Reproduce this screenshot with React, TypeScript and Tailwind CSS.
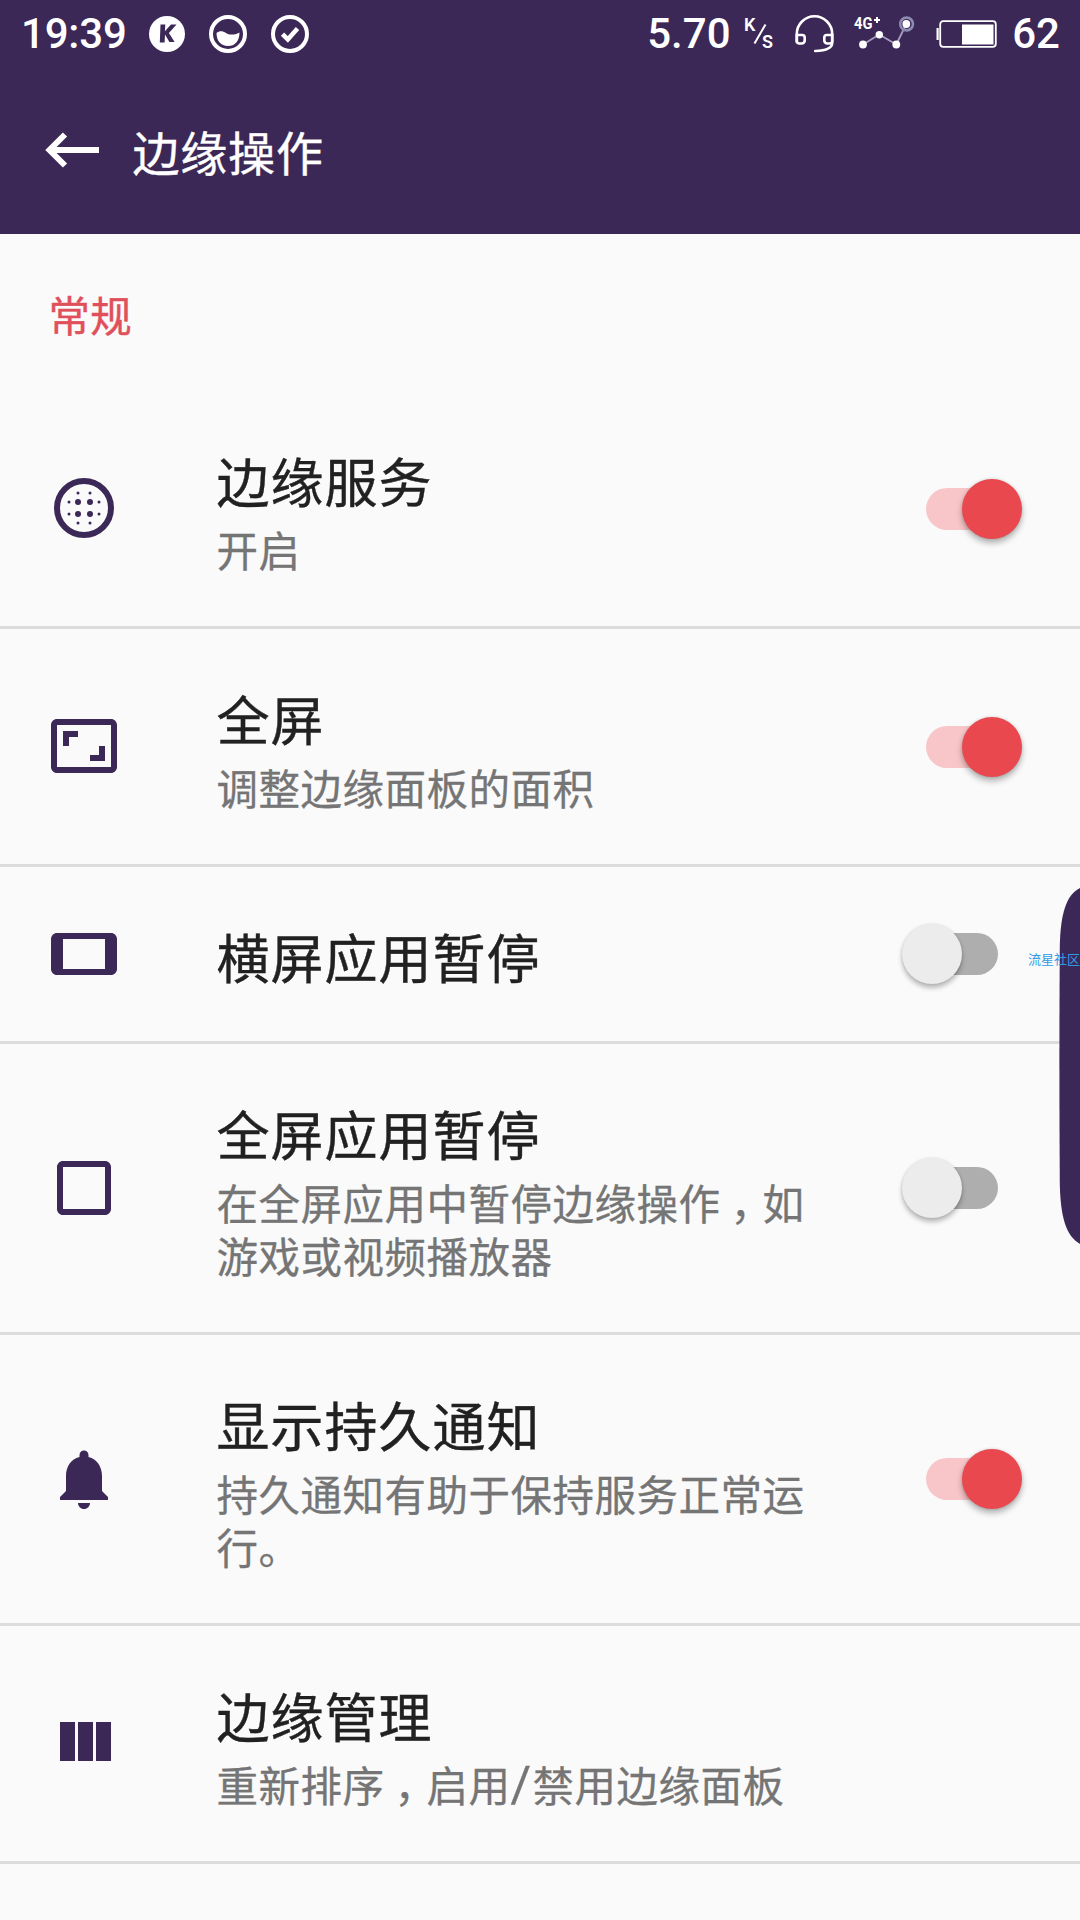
import React from "react";

const INK = "#3b2856";

function KIcon() {
  return (
    <svg width="38" height="38" viewBox="0 0 38 38">
      <circle cx="19" cy="19" r="18" fill="#fff" />
      <path d="M12.500 9.500h4.800l-.4 6.800 6.100-6.800h5.500l-7.600 8.400 5.700 9.100h-5.200l-4.400-7.400-.4 7.900h-4.800z" fill={INK} />
    </svg>
  );
}

function WaveIcon() {
  return (
    <svg width="38" height="38" viewBox="0 0 38 38">
      <circle cx="19" cy="19" r="17" fill="none" stroke="#fff" strokeWidth="4" />
      <path d="M7.500 18c3-2.400 6-2.400 9.500 0s8.500 2 13.500-.6C30.500 26 26 31 19 31S7.500 26 7.500 18z" fill="#fff" />
    </svg>
  );
}

function CheckIcon() {
  return (
    <svg width="38" height="38" viewBox="0 0 38 38">
      <circle cx="19" cy="19" r="17" fill="none" stroke="#fff" strokeWidth="4" />
      <path d="M11.500 19.200l5.300 5.300 9.700-11" fill="none" stroke="#fff" strokeWidth="4.600" />
    </svg>
  );
}

function HeadsetIcon() {
  return (
    <svg width="39" height="38" viewBox="0 0 39 38" fill="none" stroke="#fff" strokeWidth="2.600">
      <path d="M1.800 27V19a17.700 17.700 0 0 1 35.400 0v9c0 5-5 7.500-17 8" strokeLinecap="round" />
      <path d="M1.800 20h5.400a2.500 2.500 0 0 1 2.500 2.500v3a3 3 0 0 1-3 3h-2.400a2.500 2.500 0 0 1-2.500-2.500z" />
      <path d="M37.200 20h-5.400a2.500 2.500 0 0 0-2.500 2.500v3a3 3 0 0 0 3 3h2.400a2.500 2.500 0 0 0 2.500-2.500z" />
    </svg>
  );
}

function SignalIcon() {
  return (
    <svg width="62" height="36" viewBox="0 0 62 36" className="overflow-visible">
      <path d="M9 28.500L25.300 18.500L42.300 28.500L52.300 8" fill="none" stroke="#a99fc0" strokeWidth="1.800" />
      <circle cx="52.600" cy="8" r="6.400" fill="none" stroke="#8c8ab0" strokeWidth="2.600" />
      <g fill="#fff">
        <circle cx="9" cy="28.500" r="3.900" />
        <circle cx="25.300" cy="18.700" r="3.700" />
        <circle cx="42.300" cy="28.500" r="3.900" />
        <circle cx="52.300" cy="8" r="3.900" />
      </g>
      <text x="0" y="13" fill="#fff" fontSize="16.500" fontWeight="700" fontFamily="Roboto, sans-serif" textLength="18.500" lengthAdjust="spacingAndGlyphs">4G</text>
      <path d="M20 4h6M23 1v6" stroke="#fff" strokeWidth="2" />
    </svg>
  );
}

function BatteryIcon() {
  return (
    <svg width="62" height="30" viewBox="0 0 62 30">
      <rect x="4.200" y="2.200" width="55.600" height="25.600" rx="3" fill="none" stroke="#fff" strokeWidth="1.800" />
      <rect x="0.500" y="9" width="2.200" height="12" fill="#fff" />
      <rect x="26" y="5.500" width="31.500" height="20" fill="#fff" />
    </svg>
  );
}

function StatusBar() {
  return (
    <div className="flex h-[66px] items-center justify-between pt-px pr-[20px] pl-[21px] text-[42px] leading-[66px] font-medium text-white">
      <div className="flex items-center">
        <span className="w-[127px] tracking-[-0.2px]">19:39</span>
        <KIcon />
        <span className="ml-[23px]"><WaveIcon /></span>
        <span className="ml-[24px]"><CheckIcon /></span>
      </div>
      <div className="flex items-center">
        <span className="w-[97px]">5.70</span>
        <svg width="32" height="42" viewBox="0 -2 32 42" className="mr-[19px] overflow-visible">
          <text x="0" y="16" fill="#fff" fontSize="18" fontWeight="600" fontFamily="Roboto, sans-serif">K</text>
          <path d="M10.500 28.500L21.500 9.500" stroke="#fff" strokeWidth="2" />
          <text x="18" y="33" fill="#fff" fontSize="18" fontWeight="600" fontFamily="Roboto, sans-serif">S</text>
        </svg>
        <HeadsetIcon />
        <span className="ml-[20px]"><SignalIcon /></span>
        <span className="ml-[20px]"><BatteryIcon /></span>
        <span className="ml-[14px]">62</span>
      </div>
    </div>
  );
}

function BlurCircular() {
  return (
    <g>
      <circle cx="12" cy="12" r="9" fill="none" stroke={INK} strokeWidth="2" />
      {[10, 14].map((x) => [10, 14].map((y) => <circle key={`${x}-${y}`} cx={x} cy={y} r="1" />))}
      {[7, 17].map((a) =>
        [10, 14].map((b) => (
          <g key={`${a}-${b}`}>
            <circle cx={a} cy={b} r="0.5" />
            <circle cx={b} cy={a} r="0.5" />
          </g>
        )),
      )}
    </g>
  );
}

const AspectRatio = () => (
  <path d="M19 12h-2v3h-3v2h5v-5zM7 9h3V7H5v5h2V9zm14-6H3c-1.100 0-2 .9-2 2v14c0 1.100.9 2 2 2h18c1.100 0 2-.9 2-2V5c0-1.100-.9-2-2-2zm0 16.010H3V4.990h18v14.020z" />
);
const Landscape = () => (
  <path d="M1.010 7L1 17c0 1.100.9 2 2 2h18c1.100 0 2-.9 2-2V7c0-1.100-.9-2-2-2H3c-1.100 0-1.990.9-1.990 2zM19 7v10H5V7h14z" />
);
const Square = () => (
  <path d="M19 3H5c-1.100 0-2 .9-2 2v14c0 1.100.9 2 2 2h14c1.100 0 2-.9 2-2V5c0-1.100-.9-2-2-2zm0 16H5V5h14v14z" />
);
const Bell = () => (
  <path d="M12 22c1.100 0 2-.9 2-2h-4c0 1.100.89 2 2 2zm6-6v-5c0-3.070-1.640-5.640-4.500-6.320V4c0-.83-.67-1.500-1.500-1.500s-1.500.67-1.500 1.500v.68C7.630 5.360 6 7.920 6 11v5l-2 2v1h16v-1l-2-2z" />
);
const Columns = () => <path d="M10 18h5V5h-5v13zm-6 0h5V5H4v13zM16 5v13h5V5h-5z" />;

function Switch({ on }: { on: boolean }) {
  return on ? (
    <div className="flex h-[60px] w-[119.5px] items-center justify-end">
      <div className="-mr-[36px] h-[42px] w-[72px] rounded-full bg-[#f8c6c8]" />
      <div className="z-10 size-[60px] rounded-full bg-[#e8484e] shadow-[0_4px_6px_rgba(0,0,0,0.3),0_0_3px_rgba(0,0,0,0.12)]" />
    </div>
  ) : (
    <div className="flex h-[60px] w-[120px] items-center">
      <div className="z-10 size-[60px] rounded-full bg-[#ececec] shadow-[0_4px_5px_rgba(0,0,0,0.26),0_0_3px_rgba(0,0,0,0.12)]" />
      <div className="-ml-[36px] h-[42px] w-[72px] rounded-full bg-[#aeaeae]" />
    </div>
  );
}

const Comma = () => (
  <span className="ml-[10px] inline-block w-[32px] [font-feature-settings:'halt']">，</span>
);

type RowProps = { icon: React.ReactNode; title: string; lines?: React.ReactNode[]; on?: boolean };

function Row({ icon, title, lines, on }: RowProps) {
  const nudge = lines?.length === 1 ? "mb-px shrink-0" : "shrink-0";
  return (
    <div className="flex items-center border-b-[3px] border-[#dcdcdc] pl-12">
      <svg width="72" height="72" viewBox="0 0 24 24" fill={INK} className={nudge}>
        {icon}
      </svg>
      <div className={lines ? "ml-24 w-[640px] pt-[53px] pb-[47px]" : "ml-24 w-[640px] pt-[53px] pb-[39px]"}>
        <div className="pl-[0.5px] text-[53px] leading-[82px] tracking-[1px] whitespace-nowrap text-[#212121] [-webkit-text-stroke:0.4px_#212121]">
          {title}
        </div>
        {lines?.map((line, i) => (
          <div
            key={i}
            className="h-[53px] pl-[0.5px] text-[41.5px] leading-[53px] tracking-[0.5px] whitespace-nowrap text-[#757575] [-webkit-text-stroke:0.3px_#757575]"
          >
            {line}
          </div>
        ))}
      </div>
      {on !== undefined && (
        <div className="ml-[46px]">
          <Switch on={on} />
        </div>
      )}
    </div>
  );
}

export default function App() {
  return (
    <div className="relative h-[1920px] w-[1080px] overflow-hidden bg-[#fafafa] font-[Roboto,'Noto_Sans_CJK_SC',sans-serif]">
      <header className="h-[234px] bg-[#3b2856]">
        <StatusBar />
        <div className="flex h-[168px] items-center pl-[45px] text-white">
          <svg width="54" height="36" viewBox="0 0 54 36" fill="none" stroke="#fff" strokeWidth="6">
            <path d="M54 18H5M20 2.500L4.500 18L20 33.500" />
          </svg>
          <h1 className="mt-[9px] ml-[33.5px] text-[47px] leading-[72px] tracking-[0.8px] [-webkit-text-stroke:0.4px_#fff]">边缘操作</h1>
        </div>
      </header>
      <main>
        <div className="h-[157px] pt-[52px] pl-[48.5px] text-[41.5px] leading-[64px] tracking-[0.2px] text-[#e0505a] [-webkit-text-stroke:0.4px_#e0505a]">常规</div>
        <Row icon={<BlurCircular />} title="边缘服务" lines={["开启"]} on={true} />
        <Row icon={<AspectRatio />} title="全屏" lines={["调整边缘面板的面积"]} on={true} />
        <Row icon={<Landscape />} title="横屏应用暂停" on={false} />
        <Row
          icon={<Square />}
          title="全屏应用暂停"
          lines={[<>在全屏应用中暂停边缘操作<Comma />如</>, "游戏或视频播放器"]}
          on={false}
        />
        <Row icon={<Bell />} title="显示持久通知" lines={["持久通知有助于保持服务正常运", "行。"]} on={true} />
        <Row
          icon={<Columns />}
          title="边缘管理"
          lines={[
            <>
              重新排序<Comma />启用<span className="inline-block w-[22px] text-[50px] leading-[40px]">/</span>禁用边缘面板
            </>,
          ]}
        />
      </main>
      <svg className="absolute top-[888px] right-0" width="21" height="356" viewBox="0 0 21 356">
        <path d="M21 0C7 7 1.500 26 .8 58Q0 178 .8 296C1.500 329 7 348 21 356Z" fill={INK} />
      </svg>
      <div className="absolute top-[950px] right-0 text-[13px] leading-5 whitespace-nowrap text-[#2f9be6]">流星社区</div>
    </div>
  );
}
